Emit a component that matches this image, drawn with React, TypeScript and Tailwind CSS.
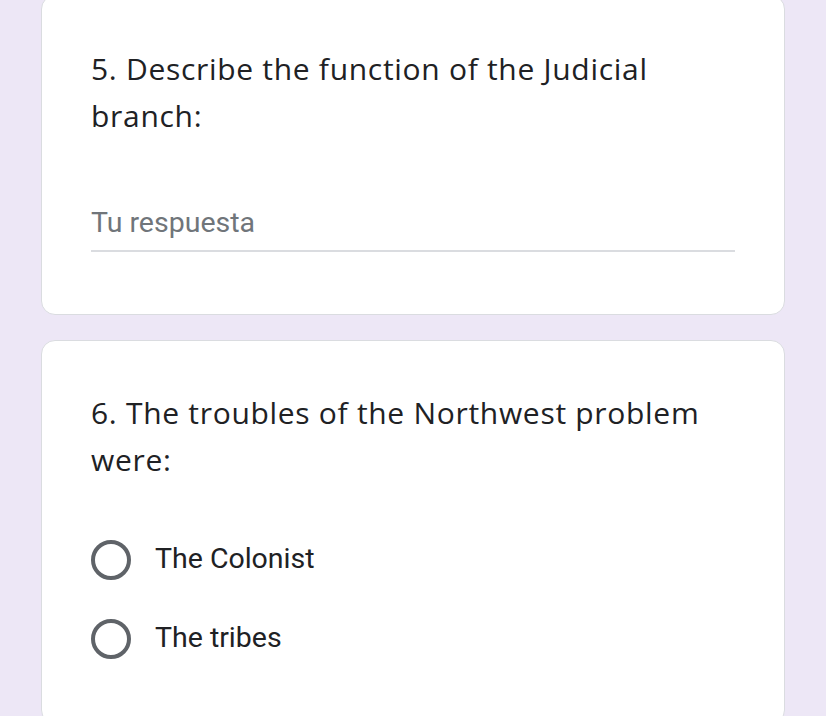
import React from "react";

const roboto = { fontFamily: "Roboto, 'Liberation Sans', sans-serif" };

function Radio({ label }: { label: string }) {
  return (
    <div className="flex items-center h-[40px]">
      <div className="w-[40px] h-[40px] rounded-full border-[4px] border-[#5f6368] box-border shrink-0" />
      <span className="ml-[24px] text-[28.5px] text-[#202124]" style={roboto}>
        {label}
      </span>
    </div>
  );
}

export default function App() {
  const titleFont = { fontFamily: "'Open Sans', 'Noto Sans', sans-serif" };
  return (
    <div className="w-[826px] h-[716px] overflow-hidden bg-[#ede7f6] px-[41px]">
      <div className="-mt-[5px] bg-white border border-[#dadce0] rounded-[14px] px-[49px] pt-[49px] pb-[62px]">
        <div className="text-[30px] leading-[47px] tracking-[0.7px] text-[#202124]" style={titleFont}>
          5. Describe the function of the Judicial branch:
        </div>
        <div className="mt-[63px] border-b-2 border-[#dadce0] pb-[5px]">
          <span className="text-[28.5px] text-[#70757a]" style={roboto}>
            Tu respuesta
          </span>
        </div>
      </div>
      <div className="mt-[25px] bg-white border border-[#dadce0] rounded-[14px] px-[49px] pt-[48px] pb-[64px]">
        <div className="text-[30px] leading-[47px] tracking-[0.7px] text-[#202124]" style={titleFont}>
          6. The troubles of the Northwest problem were:
        </div>
        <div className="mt-[57px] flex flex-col gap-[39px]">
          <Radio label="The Colonist" />
          <Radio label="The tribes" />
        </div>
      </div>
    </div>
  );
}
